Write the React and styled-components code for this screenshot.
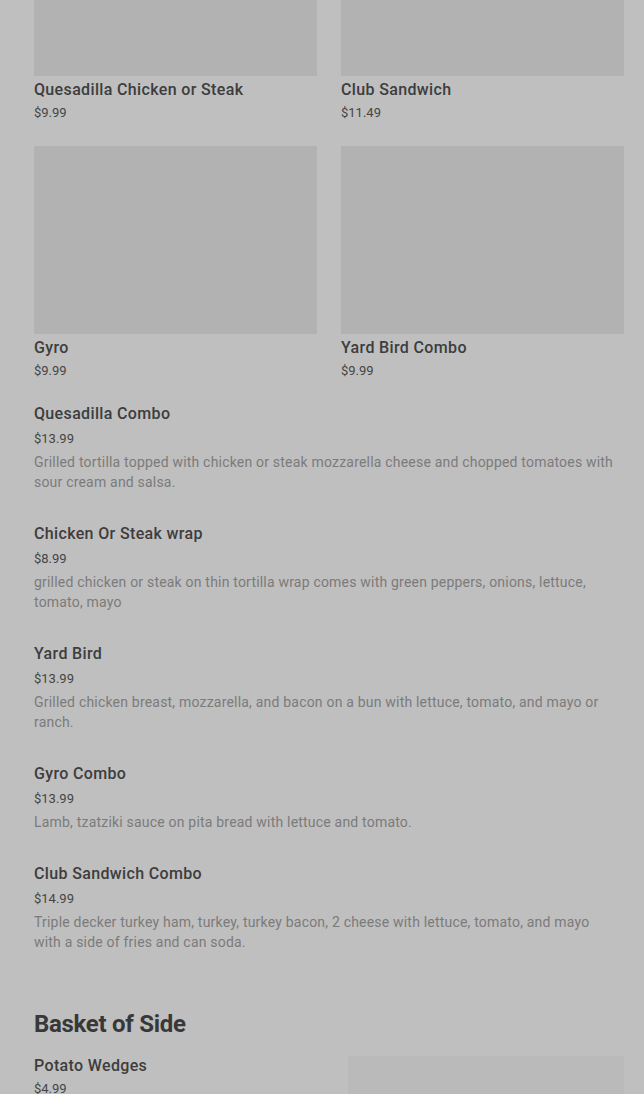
import React from "react";
import styled, { createGlobalStyle } from "styled-components";

const Global = createGlobalStyle`
  html, body { margin: 0; padding: 0; background: #bfbfbf; }
  body { font-family: Roboto, "Noto Sans", Arial, sans-serif; -webkit-font-smoothing: antialiased; }
  * { box-sizing: border-box; }
`;

const Viewport = styled.div`
  width: 644px;
  height: 1094px;
  overflow: hidden;
  background: #bfbfbf;
`;

const Content = styled.main`
  margin-top: -112px;
  padding: 0 20px 0 34px;
  display: flex;
  flex-direction: column;
`;

const Grid = styled.div`
  display: grid;
  grid-template-columns: 283px 283px;
  column-gap: 24px;
  row-gap: 23px;
  margin-bottom: 22px;
`;

const Card = styled.div`
  display: flex;
  flex-direction: column;
`;

const Thumb = styled.div`
  height: 188px;
  background: #b2b2b2;
  margin-bottom: 3px;
`;

const Title = styled.div`
  font-size: 16px;
  line-height: 22px;
  font-weight: 500;
  letter-spacing: 0.35px;
  color: #3d3d3d;
`;

const Price = styled.div`
  font-size: 13px;
  line-height: 20px;
  color: #454545;
  margin-top: ${(p) => (p.$tight ? "2px" : "4px")};
`;

const Desc = styled.div`
  font-size: 14px;
  line-height: 20px;
  letter-spacing: 0.2px;
  color: #7b7b7b;
  margin-top: 3px;
  margin-bottom: 1px;
`;

const List = styled.div`
  display: flex;
  flex-direction: column;
  gap: 30px;
`;

const Item = styled.div`
  display: flex;
  flex-direction: column;
  padding-right: 6px;
`;

const Heading = styled.h2`
  margin: 55px 0 15px;
  font-size: 24px;
  line-height: 32px;
  font-weight: 700;
  letter-spacing: -0.3px;
  color: #383838;
`;

const SideRow = styled.div`
  display: flex;
  justify-content: space-between;
`;

const SideText = styled.div`
  display: flex;
  flex-direction: column;
`;

const SideThumb = styled.div`
  width: 276px;
  height: 120px;
  margin-top: 1px;
  background: #bababa;
`;

const gridItems = [
  { name: "Quesadilla Chicken or Steak", price: "$9.99" },
  { name: "Club Sandwich", price: "$11.49" },
  { name: "Gyro", price: "$9.99" },
  { name: "Yard Bird Combo", price: "$9.99" },
];

const listItems = [
  {
    name: "Quesadilla Combo",
    price: "$13.99",
    desc: "Grilled tortilla topped with chicken or steak mozzarella cheese and chopped tomatoes with sour cream and salsa.",
  },
  {
    name: "Chicken Or Steak wrap",
    price: "$8.99",
    desc: "grilled chicken or steak on thin tortilla wrap comes with green peppers, onions, lettuce, tomato, mayo",
  },
  {
    name: "Yard Bird",
    price: "$13.99",
    desc: "Grilled chicken breast, mozzarella, and bacon on a bun with lettuce, tomato, and mayo or ranch.",
  },
  {
    name: "Gyro Combo",
    price: "$13.99",
    desc: "Lamb, tzatziki sauce on pita bread with lettuce and tomato.",
  },
  {
    name: "Club Sandwich Combo",
    price: "$14.99",
    desc: "Triple decker turkey ham, turkey, turkey bacon, 2 cheese with lettuce, tomato, and mayo with a side of fries and can soda.",
  },
];

export default function App() {
  return (
    <Viewport>
      <Global />
      <Content>
        <Grid>
          {gridItems.map((it) => (
            <Card key={it.name}>
              <Thumb />
              <Title>{it.name}</Title>
              <Price $tight>{it.price}</Price>
            </Card>
          ))}
        </Grid>
        <List>
          {listItems.map((it) => (
            <Item key={it.name}>
              <Title>{it.name}</Title>
              <Price>{it.price}</Price>
              <Desc>{it.desc}</Desc>
            </Item>
          ))}
        </List>
        <Heading>Basket of Side</Heading>
        <SideRow>
          <SideText>
            <Title>Potato Wedges</Title>
            <Price $tight>$4.99</Price>
          </SideText>
          <SideThumb />
        </SideRow>
      </Content>
    </Viewport>
  );
}
